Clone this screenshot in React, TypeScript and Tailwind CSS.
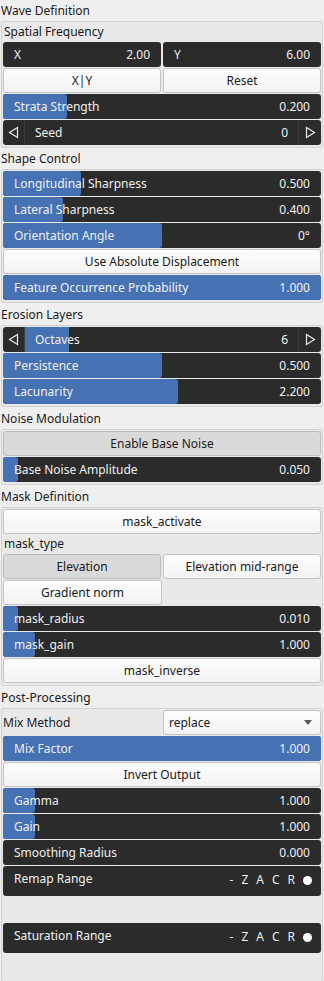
import React from "react";

const font = "font-['Noto_Sans',sans-serif]";

function Header({ title, tall = true }: { title: string; tall?: boolean }) {
	return (
		<div
			className={`shrink-0 flex items-center px-[1px] text-[12px] text-[#1a1a1a] ${
				tall ? "h-[22px] pt-[1px]" : "h-[21px]"
			}`}
		>
			{title}
		</div>
	);
}

function Box({ children, grow = false }: { children: React.ReactNode; grow?: boolean }) {
	return (
		<div
			className={`mx-[1px] border border-[#d2d2d2] rounded-[2px] bg-[#e9e9e9] px-[1px] pt-[1px] pb-[2px] flex flex-col gap-[1px] ${
				grow ? "flex-1" : "shrink-0"
			}`}
		>
			{children}
		</div>
	);
}

function Slider({ label, value, frac }: { label: string; value: string; frac: number }) {
	return (
		<div className="relative shrink-0 h-[25px] rounded-[3px] bg-[#2b2b2b] overflow-hidden">
			{frac > 0 && (
				<div
					className="absolute left-0 top-0 bottom-0 rounded-[3px] bg-[#4672b4]"
					style={{ width: `${frac * 100}%` }}
				/>
			)}
			<div className="relative h-full flex items-center justify-between pl-[11px] pr-[11px] text-[12px] text-[#f0f0f0]">
				<span>{label}</span>
				<span>{value}</span>
			</div>
		</div>
	);
}

function Arrow({ dir }: { dir: "left" | "right" }) {
	return (
		<svg width="11" height="13" viewBox="0 0 11 13">
			{dir === "left" ? (
				<path d="M9.5 1.5 L1.5 6.5 L9.5 11.5 Z" fill="none" stroke="#f0f0f0" strokeWidth="1.2" />
			) : (
				<path d="M1.5 1.5 L9.5 6.5 L1.5 11.5 Z" fill="none" stroke="#f0f0f0" strokeWidth="1.2" />
			)}
		</svg>
	);
}

function IntSlider({ label, value, frac }: { label: string; value: string; frac: number }) {
	return (
		<div className="shrink-0 h-[25px] rounded-[3px] bg-[#2b2b2b] flex overflow-hidden text-[12px] text-[#f0f0f0]">
			<div className="w-[22px] flex items-center justify-center border-r border-[#3c3c3c]">
				<Arrow dir="left" />
			</div>
			<div className="relative flex-1">
				{frac > 0 && (
					<div className="absolute left-0 top-0 bottom-0 bg-[#4672b4]" style={{ width: `${frac * 100}%` }} />
				)}
				<div className="relative h-full flex items-center justify-between pl-[10px] pr-[10px]">
					<span>{label}</span>
					<span>{value}</span>
				</div>
			</div>
			<div className="w-[23px] flex items-center justify-center border-l border-[#3c3c3c]">
				<Arrow dir="right" />
			</div>
		</div>
	);
}

function Button({ label, checked = false, wide = false }: { label: string; checked?: boolean; wide?: boolean }) {
	return (
		<div
			className={`h-[25px] shrink-0 rounded-[3px] border flex items-center justify-center text-[12px] text-[#1a1a1a] ${
				wide ? "flex-1" : ""
			} ${
				checked
					? "bg-[#dadada] border-[#bdbdbd]"
					: "bg-gradient-to-b from-[#fdfdfd] to-[#f3f3f3] border-[#c4c4c4]"
			}`}
		>
			{label}
		</div>
	);
}

function Range({ label }: { label: string }) {
	return (
		<div className="shrink-0 flex flex-col">
			<div className="h-[30px] rounded-[3px] bg-[#2b2b2b] flex items-start justify-between pl-[11px] pr-[9px] pt-[4px] text-[12px] text-[#f0f0f0]">
				<span>{label}</span>
				<div className="flex items-center gap-[8px] pt-[1px]">
					<span>-</span>
					<span>Z</span>
					<span>A</span>
					<span>C</span>
					<span>R</span>
					<span className="w-[9px] h-[9px] rounded-full bg-white" />
				</div>
			</div>
			<div className="h-[26px]" />
		</div>
	);
}

function Pair({ children }: { children: React.ReactNode }) {
	return <div className="shrink-0 flex gap-[2px]">{children}</div>;
}

export default function App() {
	return (
		<div className={`${font} w-[324px] h-[981px] bg-[#efefef] flex flex-col`}>
			<Header title="Wave Definition" tall={false} />
			<Box>
				<div className="h-[18px] shrink-0 flex items-center px-[1px] text-[12px] text-[#1a1a1a]">Spatial Frequency</div>
				<Pair>
					<div className="flex-1 h-[25px] rounded-[3px] bg-[#2b2b2b] flex items-center justify-between pl-[11px] pr-[11px] text-[12px] text-[#f0f0f0]">
						<span>X</span>
						<span>2.00</span>
					</div>
					<div className="flex-1 h-[25px] rounded-[3px] bg-[#2b2b2b] flex items-center justify-between pl-[11px] pr-[11px] text-[12px] text-[#f0f0f0]">
						<span>Y</span>
						<span>6.00</span>
					</div>
				</Pair>
				<Pair>
					<Button label="X|Y" wide />
					<Button label="Reset" wide />
				</Pair>
				<Slider label="Strata Strength" value="0.200" frac={0.2} />
				<IntSlider label="Seed" value="0" frac={0} />
			</Box>

			<Header title="Shape Control" tall={false} />
			<Box>
				<Slider label="Longitudinal Sharpness" value="0.500" frac={0.245} />
				<Slider label="Lateral Sharpness" value="0.400" frac={0.19} />
				<Slider label="Orientation Angle" value="0°" frac={0.5} />
				<Button label="Use Absolute Displacement" />
				<Slider label="Feature Occurrence Probability" value="1.000" frac={1} />
			</Box>

			<Header title="Erosion Layers" />
			<Box>
				<IntSlider label="Octaves" value="6" frac={0.16} />
				<Slider label="Persistence" value="0.500" frac={0.5} />
				<Slider label="Lacunarity" value="2.200" frac={0.55} />
			</Box>

			<Header title="Noise Modulation" />
			<Box>
				<Button label="Enable Base Noise" checked />
				<Slider label="Base Noise Amplitude" value="0.050" frac={0.047} />
			</Box>

			<Header title="Mask Definition" />
			<Box>
				<Button label="mask_activate" />
				<div className="h-[18px] shrink-0 flex items-center px-[1px] text-[12px] text-[#1a1a1a]">mask_type</div>
				<Pair>
					<Button label="Elevation" checked wide />
					<Button label="Elevation mid-range" wide />
				</Pair>
				<Pair>
					<Button label="Gradient norm" wide />
					<div className="flex-1" />
				</Pair>
				<Slider label="mask_radius" value="0.010" frac={0.047} />
				<Slider label="mask_gain" value="1.000" frac={0.1} />
				<Button label="mask_inverse" />
			</Box>

			<Header title="Post-Processing" />
			<Box grow>
				<div className="shrink-0 flex gap-[2px] items-center">
					<div className="w-[158px] h-[25px] flex items-center text-[12px] text-[#1a1a1a]">Mix Method</div>
					<div className="flex-1 h-[25px] rounded-[3px] border border-[#c4c4c4] bg-gradient-to-b from-[#fdfdfd] to-[#f3f3f3] flex items-center justify-between pl-[5px] pr-[8px] text-[12px] text-[#1a1a1a]">
						<span>replace</span>
						<svg width="8" height="5" viewBox="0 0 8 5">
							<path d="M0 0 L8 0 L4 5 Z" fill="#5a5a5a" />
						</svg>
					</div>
				</div>
				<Slider label="Mix Factor" value="1.000" frac={1} />
				<Button label="Invert Output" />
				<Slider label="Gamma" value="1.000" frac={0.1} />
				<Slider label="Gain" value="1.000" frac={0.1} />
				<Slider label="Smoothing Radius" value="0.000" frac={0} />
				<Range label="Remap Range" />
				<Range label="Saturation Range" />
			</Box>
		</div>
	);
}
